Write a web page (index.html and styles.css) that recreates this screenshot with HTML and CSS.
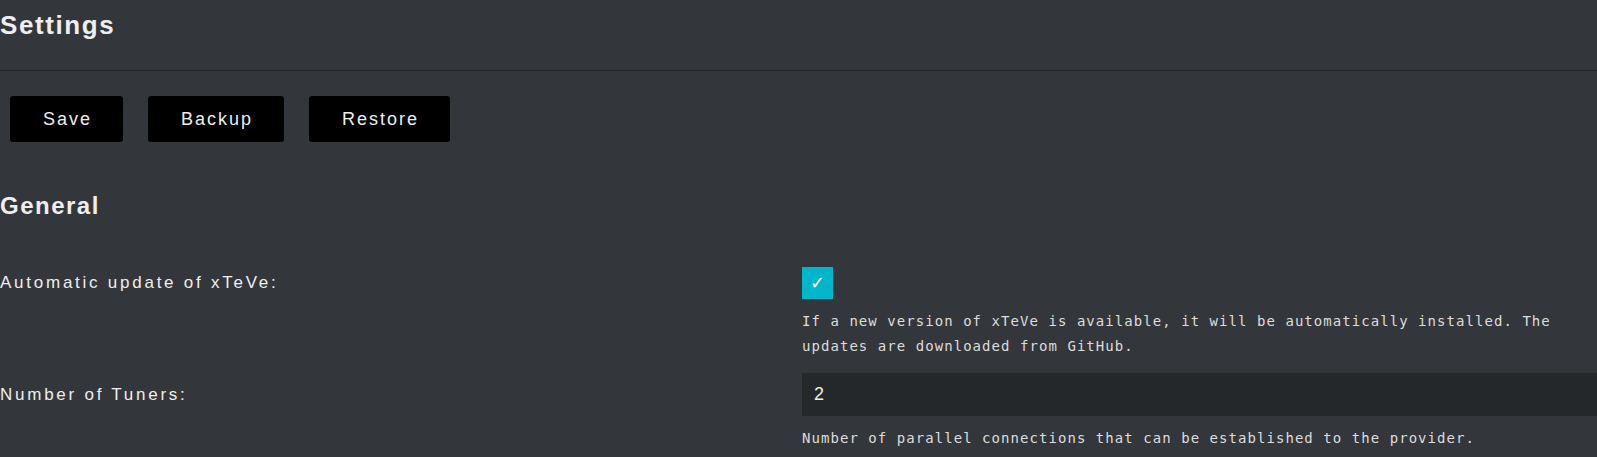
FILE: index.html
```html
<!DOCTYPE html>
<html lang="en">
<head>
<meta charset="utf-8">
<title>Settings</title>
<link rel="stylesheet" href="styles.css">
</head>
<body>
  <header class="page-header">
    <h1 class="page-title">Settings</h1>
  </header>
  <div class="toolbar">
    <button class="btn" type="button">Save</button>
    <button class="btn" type="button">Backup</button>
    <button class="btn" type="button">Restore</button>
  </div>
  <h2 class="section-title">General</h2>
  <div class="setting">
    <label class="setting-label">Automatic update of xTeVe:</label>
    <div class="setting-control">
      <span class="checkbox" role="checkbox" aria-checked="true">✓</span>
    </div>
    <p class="setting-desc">If a new version of xTeVe is available, it will be automatically installed. The updates are downloaded from GitHub.</p>
  </div>
  <div class="setting">
    <label class="setting-label">Number of Tuners:</label>
    <div class="setting-control">
      <input class="text-input" type="text" value="2">
    </div>
    <p class="setting-desc">Number of parallel connections that can be established to the provider.<br>Available for: Plex, Emby (HDHR), M3U (with active buffer).<br>After a change, xTeVe must be deleted in the Plex / Emby DVR settings and set up again.</p>
  </div>
</body>
</html>
```
FILE: styles.css
```css
html, body {
  margin: 0;
  padding: 0;
  background: #33363a;
  color: #eeeeee;
  font-family: "Liberation Sans", Arial, sans-serif;
  overflow: hidden;
}

.page-header {
  padding: 12px 0 32px 0;
  border-bottom: 1px solid #26292b;
}

.page-title {
  margin: 0;
  font-size: 26px;
  line-height: 26px;
  font-weight: bold;
  letter-spacing: 1.6px;
  color: #eeeeee;
}

.toolbar {
  display: flex;
  gap: 25px;
  padding: 25px 0 0 10px;
}

.btn {
  height: 46px;
  padding: 0 31px 0 33px;
  background: #000000;
  color: #eeeeee;
  border: none;
  border-radius: 3px;
  font-family: "Liberation Sans", Arial, sans-serif;
  font-size: 18px;
  letter-spacing: 2px;
  cursor: pointer;
}

.section-title {
  margin: 52px 0 0 0;
  font-size: 24px;
  line-height: 24px;
  font-weight: bold;
  letter-spacing: 1.5px;
  color: #eeeeee;
}

.setting {
  display: grid;
  grid-template-columns: 802px 1fr;
  align-items: center;
}

.section-title + .setting {
  margin-top: 49px;
}

.setting + .setting {
  margin-top: 15px;
}

.setting-label {
  grid-column: 1;
  grid-row: 1;
  font-size: 17px;
  line-height: 20px;
  letter-spacing: 2.75px;
  color: #eeeeee;
}

.setting-control {
  grid-column: 2;
  grid-row: 1;
  display: flex;
}

.setting-desc {
  grid-column: 2;
  grid-row: 2;
  margin: 10px 0 0 0;
  font-family: "DejaVu Sans Mono", "Liberation Mono", monospace;
  font-size: 14px;
  line-height: 24.5px;
  letter-spacing: 1.05px;
  color: #dddddd;
}

.checkbox {
  display: flex;
  align-items: center;
  justify-content: center;
  width: 31px;
  height: 32px;
  background: #00b6cb;
  color: #ffffff;
  font-family: "DejaVu Sans", sans-serif;
  font-size: 18px;
  font-weight: 300;
  line-height: 1;
}

.text-input {
  box-sizing: border-box;
  width: 100%;
  height: 43px;
  padding: 0 12px;
  background: #25282a;
  color: #eeeeee;
  border: none;
  outline: none;
  font-family: "Liberation Sans", Arial, sans-serif;
  font-size: 18px;
}
```
